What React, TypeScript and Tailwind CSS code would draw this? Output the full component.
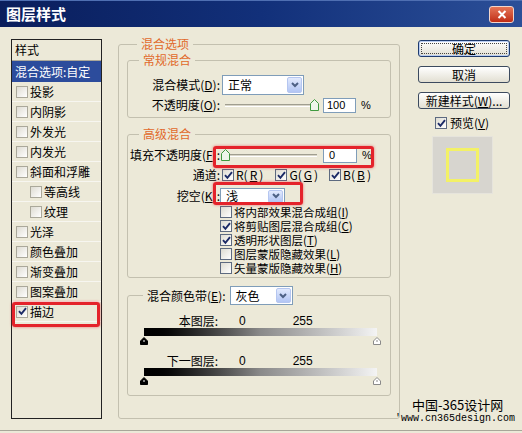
import React from "react";

function Check({ on, light }: { on?: boolean; light?: boolean }) {
  return (
    <span
      className={[
        "inline-flex h-[12px] w-[12px] shrink-0 items-center justify-center border bg-gradient-to-br from-[#dedcd2] to-white",
        light ? "border-[#aaa89a]" : "border-[#5d6a80]",
      ].join(" ")}
    >
      {on && (
        <svg width="9" height="9" viewBox="0 0 9 9">
          <path d="M1 4.2 L3.4 6.8 L8 1.2" fill="none" stroke="#1b2a66" strokeWidth="1.9" />
        </svg>
      )}
    </span>
  );
}

function Select({ value, className }: { value: string; className: string }) {
  return (
    <div className={["flex items-stretch border border-[#7f9db9] bg-white", className].join(" ")}>
      <span className="flex flex-1 items-center pl-[5px]">{value}</span>
      <span className="m-[1px] flex w-[15px] items-center justify-center rounded-[2px] border border-[#b5c6f0] bg-gradient-to-b from-[#e2eafd] to-[#b2c5f4]">
        <svg width="8" height="6" viewBox="0 0 8 6">
          <path d="M1 1 L4 4 L7 1" fill="none" stroke="#4d6185" strokeWidth="2" />
        </svg>
      </span>
    </div>
  );
}

function SliderThumb() {
  return (
    <svg width="9" height="12" viewBox="0 0 9 12" className="shrink-0">
      <path d="M4.5 0.5 L8.5 4.5 L8.5 11.5 L0.5 11.5 L0.5 4.5 Z" fill="#eef6ea" stroke="#3f9a3f" />
    </svg>
  );
}

function Track() {
  return <div className="h-[3px] flex-1 border-t border-b border-t-[#a09e90] border-b-white bg-[#d9d6c8]" />;
}

function BandThumb({ dark }: { dark?: boolean }) {
  return (
    <svg width="8" height="8" viewBox="0 0 8 8">
      <path
        d="M4 0.5 L7.5 4 L7.5 7.5 L0.5 7.5 L0.5 4 Z"
        fill={dark ? "#000" : "#fff"}
        stroke={dark ? "#000" : "#8a8a8a"}
      />
      <path d="M4 3 L4 5" stroke={dark ? "#fff" : "#8a8a8a"} />
    </svg>
  );
}

function Band({ label }: { label: string }) {
  return (
    <div className="mt-[9px]">
      <div className="flex h-[14px] items-center">
        <span className="w-[74px] text-right">{label}</span>
        <span className="ml-[21px] font-['Liberation_Sans',sans-serif]">0</span>
        <span className="ml-[47px] font-['Liberation_Sans',sans-serif]">255</span>
      </div>
      <div className="h-[8px] w-[233px] bg-gradient-to-r from-black via-[#8a8a8a] to-[#f4f4f4]" />
      <div className="-ml-[4px] flex h-[9px] w-[241px] items-end justify-between">
        <BandThumb dark />
        <BandThumb />
      </div>
    </div>
  );
}

const items = [
  { t: "投影" },
  { t: "内阴影" },
  { t: "外发光" },
  { t: "内发光" },
  { t: "斜面和浮雕" },
  { t: "等高线", sub: true },
  { t: "纹理", sub: true },
  { t: "光泽" },
  { t: "颜色叠加" },
  { t: "渐变叠加" },
  { t: "图案叠加" },
  { t: "描边", on: true },
];

function StyleList() {
  return (
    <div className="relative mt-[3px] h-[380px] w-[91px] shrink-0 border border-[#222]">
      <div className="flex h-[21px] items-center border-b border-[#aca899] pl-[3px]">样式</div>
      <div className="flex h-[21px] items-center bg-[#2c4c9c] pl-[3px] text-white">混合选项:自定</div>
      {items.map((it) => (
        <div
          key={it.t}
          className={[
            "flex h-[20px] items-center gap-[2px] border-b border-[#f7f6f0]",
            it.sub ? "pl-[18px]" : "pl-[4px]",
          ].join(" ")}
        >
          <Check light on={it.on} />
          <span>{it.t}</span>
        </div>
      ))}
      <div className="absolute left-0 top-[262px] h-[25px] w-[88px] rounded-[3px] border-[3px] border-[#e4232b] shadow-[0_0_3px_rgba(228,35,43,0.6)]" />
    </div>
  );
}

function Options() {
  return (
    <fieldset className="ml-[16px] h-[383px] w-[282px] shrink-0 rounded-[3px] border border-[#c3c0af] px-[8px]">
      <legend className="ml-[10px] px-[4px] leading-[16px] text-[#e1692b]">混合选项</legend>

      <fieldset className="h-[66px] rounded-[3px] border border-[#c3c0af]">
        <legend className="ml-[11px] px-[4px] leading-[16px] text-[#e1692b]">常规混合</legend>
        <div className="mt-[7px] flex h-[20px] items-center">
          <span className="w-[92px] shrink-0 text-right">
            混合模式(<span className="underline">D</span>):
          </span>
          <Select value="正常" className="ml-[2px] h-[20px] w-[82px]" />
        </div>
        <div className="mt-[1px] flex h-[18px] items-center">
          <span className="w-[92px] shrink-0 text-right">
            不透明度(<span className="underline">O</span>):
          </span>
          <div className="ml-[5px] flex w-[94px] items-center">
            <Track />
            <SliderThumb />
          </div>
          <div className="ml-[4px] flex h-[15px] w-[33px] items-center border border-[#7f9db9] bg-white pl-[3px] font-['Liberation_Sans',sans-serif] text-[11px]">
            100
          </div>
          <span className="ml-[5px] font-['Liberation_Sans',sans-serif] text-[11px]">%</span>
        </div>
      </fieldset>

      <fieldset className="mt-[8px] h-[152px] rounded-[3px] border border-[#c3c0af]">
        <legend className="ml-[11px] px-[4px] leading-[16px] text-[#e1692b]">高级混合</legend>
        <div className="relative mt-[4px] flex h-[18px] items-center">
          <span className="w-[92px] shrink-0 whitespace-nowrap text-right">
            填充不透明度(<span className="underline">F</span>):
          </span>
          <div className="ml-[1px] flex w-[96px] items-center">
            <SliderThumb />
            <Track />
          </div>
          <div className="ml-[6px] flex h-[15px] w-[34px] items-center border border-[#7f9db9] bg-white pl-[5px] font-['Liberation_Sans',sans-serif] text-[11px]">
            0
          </div>
          <span className="ml-[5px] font-['Liberation_Sans',sans-serif] text-[11px]">%</span>
          <div className="absolute left-[85px] top-0 h-[22px] w-[161px] rounded-[3px] border-[3px] border-[#e4232b] shadow-[0_0_3px_rgba(228,35,43,0.6)]" />
        </div>
        <div className="mt-[3px] flex h-[16px] items-center">
          <span className="w-[92px] shrink-0 text-right">通道:</span>
          <span className="ml-[2px] flex items-center gap-[2px]">
            <Check on />
            R(<span className="underline">R</span>)
          </span>
          <span className="ml-[12px] flex items-center gap-[2px]">
            <Check on />
            G(<span className="underline">G</span>)
          </span>
          <span className="ml-[11px] flex items-center gap-[2px]">
            <Check on />
            B(<span className="underline">B</span>)
          </span>
        </div>
        <div className="relative mt-[4px] flex h-[18px] items-center">
          <span className="w-[92px] shrink-0 text-right">
            挖空(<span className="underline">K</span>):
          </span>
          <Select value="浅" className="h-[17px] w-[65px]" />
          <div className="absolute -top-[5px] left-[85px] h-[23px] w-[90px] rounded-[3px] border-[3px] border-[#e4232b] shadow-[0_0_3px_rgba(228,35,43,0.6)]" />
        </div>
        {[
          { t: "将内部效果混合成组", k: "I" },
          { t: "将剪贴图层混合成组", k: "C", on: true },
          { t: "透明形状图层", k: "T", on: true },
          { t: "图层蒙版隐藏效果", k: "L" },
          { t: "矢量蒙版隐藏效果", k: "H" },
        ].map((r) => (
          <div key={r.t} className="flex h-[14px] items-center gap-[2px] pl-[92px] text-[11.5px] leading-[14px]">
            <Check on={r.on} />
            <span>
              {r.t}(<span className="underline">{r.k}</span>)
            </span>
          </div>
        ))}
      </fieldset>

      <fieldset className="mt-[8px] h-[110px] rounded-[3px] border border-[#c3c0af] pl-[16px]">
        <legend className="ml-[-1px] flex items-center px-[4px]">
          <span>
            混合颜色带(<span className="underline">E</span>):
          </span>
          <Select value="灰色" className="ml-[4px] h-[19px] w-[63px]" />
        </legend>
        <Band label="本图层:" />
        <Band label="下一图层:" />
      </fieldset>
    </fieldset>
  );
}

function Side() {
  return (
    <div className="ml-[18px] mt-[4px] flex w-[92px] shrink-0 flex-col">
      <button className="flex h-[17px] w-full rounded-[3px] border border-[#1d3a6e] bg-gradient-to-b from-white to-[#e2dfd2] p-[2px] shadow-[inset_0_0_0_1px_#b9cdf2]">
        <span className="flex flex-1 items-center justify-center border border-dotted border-[#444]">确定</span>
      </button>
      <button className="mt-[9px] flex h-[17px] w-full items-center justify-center rounded-[3px] border border-[#3c4a5e] bg-gradient-to-b from-white to-[#e2dfd2]">
        取消
      </button>
      <button className="mt-[9px] flex h-[17px] w-full items-center justify-center rounded-[3px] border border-[#3c4a5e] bg-gradient-to-b from-white to-[#e2dfd2]">
        新建样式(<span className="underline">W</span>)...
      </button>
      <div className="mt-[6px] flex h-[16px] items-center gap-[3px] pl-[17px]">
        <Check on />
        <span>
          预览(<span className="underline">V</span>)
        </span>
      </div>
      <div className="ml-[14px] mt-[5px] flex h-[58px] w-[61px] items-center justify-center border border-[#e6e4dc] bg-[#d7d5cf]">
        <div className="h-[34px] w-[33px] border-[3px] border-[#f3f166]" />
      </div>
    </div>
  );
}

export default function App() {
  return (
    <div className="relative flex h-[433px] w-[522px] flex-col overflow-hidden bg-[#ece9d8] font-['Noto_Sans_CJK_SC',sans-serif] text-[12px] leading-[14px] text-black">
      <div className="flex h-[27px] shrink-0 items-center justify-between border-t border-[#4f6fb2] bg-gradient-to-r from-[#0a1e5c] via-[#12307a] to-[#2c4f98] pl-[6px] pr-[8px]">
        <span className="text-[15px] font-bold text-white">图层样式</span>
        <span className="flex h-[17px] w-[25px] items-center justify-center rounded-[3px] border border-[#f2d6cc] bg-gradient-to-b from-[#e57456] to-[#c02a12]">
          <svg width="10" height="9" viewBox="0 0 10 9">
            <path d="M1.5 1 L8.5 8 M8.5 1 L1.5 8" stroke="#fff" strokeWidth="2" />
          </svg>
        </span>
      </div>
      <div className="flex flex-1 px-[11px] pt-[9px]">
        <StyleList />
        <Options />
        <Side />
      </div>
      <div className="h-[1px] shrink-0 bg-[#a8a699]" />
      <div className="h-[2px] shrink-0" />
      <div className="absolute left-[395px] top-[397px] flex flex-col">
        <span className="pl-[17px] text-[13px] leading-[16px]">中国-365设计网</span>
        <span className="font-['Liberation_Mono',monospace] text-[10px] leading-[12px]">'www.cn365design.com</span>
      </div>
    </div>
  );
}
